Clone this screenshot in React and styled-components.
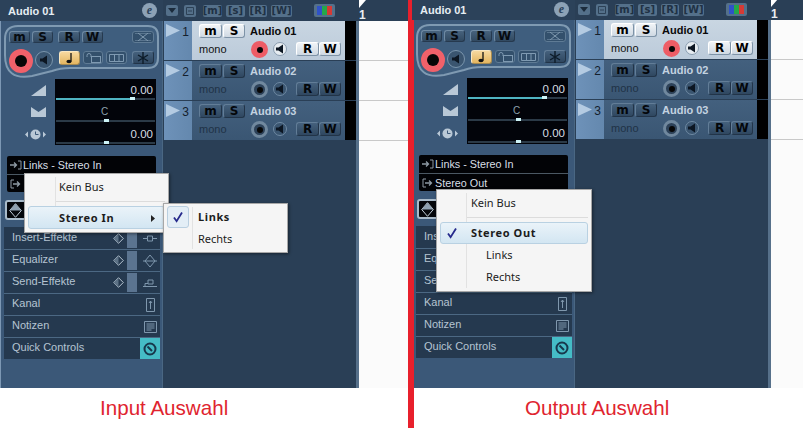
import React from "react";
import styled, { createGlobalStyle, css } from "styled-components";

const Global = createGlobalStyle`
  html, body { margin: 0; padding: 0; background: #fff; }
  #root { width: 803px; height: 428px; overflow: hidden; }
  * { box-sizing: border-box; }
`;

const Page = styled.div`
  display: flex; width: 803px; height: 428px; overflow: hidden;
  font-family: "Liberation Sans", Arial, sans-serif;
`;
const Divider = styled.div`width: 6px; flex: none; background: #e8202c;`;
const Pane = styled.div`
  position: relative; flex: none; width: ${p => p.$w}px;
  margin-top: ${p => p.$shift}px; display: flex; flex-direction: column;
`;
const Workspace = styled.div`display: flex; height: ${p => 388 - p.$shift}px; flex: none;`;
const Caption = styled.div`
  height: 40px; padding-left: ${p => p.$x}px; padding-top: 8px;
  font-size: 20.6px; line-height: 24px; color: #e0242f;
`;

const Inspector = styled.div`
  flex: none; width: ${p => p.$w}px; padding-left: ${p => p.$pad}px;
  background: #3b5878; display: flex; flex-direction: column;
  box-shadow: inset ${p => (p.$edge ? "1px" : "0")} 0 0 #7d98b4, inset -1px 0 0 #4a6783;
`;
const TitleBar = styled.div`
  height: 21px; margin-left: -4px; padding: 0 6px 0 8px; background: #2c425a;
  display: flex; align-items: center; justify-content: space-between;
  color: #e6edf3; font-size: 11px; font-weight: 700;
`;
const EditBadge = styled.span`
  width: 15px; height: 15px; border-radius: 50%; background: #8da2b6; color: #2c425a;
  font: italic 700 12px/14px "Liberation Serif", serif; text-align: center;
`;

const Group = styled.div`
  position: relative; width: 155px; height: 53px; margin-top: 4px; padding: 6px 5px 0;
`;
const GroupOutline = styled.svg`position: absolute; left: 0; top: 0;`;
const GroupRow = styled.div`position: relative; display: flex; align-items: flex-start; margin-top: ${p => p.$top || 0}px;`;

const btnTone = {
  dark: css`background: linear-gradient(#47627d, #314961); border-color: #6f8aa3 #26394e #26394e #6f8aa3; color: #070b10;`,
  light: css`background: linear-gradient(#f1f4f7, #cfd9e3); border-color: #fff #7e93a7 #7e93a7 #fff; color: #000;`,
  track: css`background: linear-gradient(#45617d, #2f4760); border-color: #627d97 #223448 #223448 #627d97; color: #04070b;`,
  amber: css`background: linear-gradient(#f7d9a0, #e4b660); border-color: #f9e7c2 #a78b52 #a78b52 #f9e7c2; color: #111;`,
  ghost: css`background: #33506c; border-color: #5f7b95; color: #7f9ab2;`,
};
const Btn = styled.div`
  flex: none; width: ${p => p.$w}px; height: ${p => p.$h || 13}px;
  margin-left: ${p => p.$gap || 0}px; margin-top: ${p => p.$top || 0}px;
  border: 1px solid; border-radius: 3px; display: flex; align-items: center; justify-content: center;
  font: 700 12px/1 "DejaVu Sans", sans-serif;
  ${p => btnTone[p.$tone || "dark"]}
`;
const Round = styled.div`
  flex: none; width: ${p => p.$d}px; height: ${p => p.$d}px; border-radius: 50%;
  margin-left: ${p => p.$gap || 0}px; margin-top: ${p => p.$top || 0}px;
  display: flex; align-items: center; justify-content: center;
  background: ${p => p.$bg}; border: ${p => p.$ring}px solid ${p => p.$border};
`;
const Dot = styled.span`width: ${p => p.$d}px; height: ${p => p.$d}px; border-radius: 50%; background: #070707;`;

const Faders = styled.div`display: flex; margin-top: 1px;`;
const FaderIcons = styled.div`width: 51px; flex: none; display: flex; flex-direction: column;`;
const FaderIcon = styled.div`height: 22px; padding-right: 9px; display: flex; align-items: center; justify-content: flex-end;`;
const FaderBox = styled.div`width: 101px; background: #02040a; padding: 0 1px;`;
const Fader = styled.div`
  position: relative; height: 22px; padding: 4px 2px 0 0; text-align: right;
  font-size: 11.5px; line-height: 14px; color: #d7dde2;
`;
const Center = styled.span`display: block; text-align: center; color: #8da0ad; font-size: 10px;`;
const Track = styled.div`position: absolute; left: 0; right: 0; bottom: 1px; height: 2px; background: #2b3a47;`;
const Fill = styled.div`height: 2px; background: #4fb4c2;`;
const Knob = styled.div`position: absolute; top: -1px; width: 5px; height: 3px; background: #cdf3f6;`;

const Bus = styled.div`
  width: 149px; margin: 11px 0 0 3px; height: 36px; background: #020306; border-radius: 2px;
  color: #d8dfe5; font-size: 10.8px;
`;
const BusRow = styled.div`
  display: flex; align-items: center; gap: 0; height: 18px; padding-left: 3px;
  border-top: ${p => (p.$sep ? "1px solid #4b5863" : "0")};
`;
const Diamond = styled.div`
  width: 40px; height: 20px; margin: 8px 0 0 1px; background: #05070b; border: 2px solid #a9bbca;
  border-radius: 3px; padding-left: 2px; display: flex; align-items: center;
`;
const Sections = styled.div`
  width: 156px; margin-top: 7px; background: #25394f; display: flex; flex-direction: column;
`;
const Section = styled.div`
  height: 22px; padding: 0 0 0 8px; display: flex; align-items: center;
  color: #b5c4d2; font-size: 11px; border-top: ${p => (p.$first ? "0" : "1px solid #4c6883")};
`;
const SectionLabel = styled.span`flex: 1; padding-bottom: 3px;`;
const Lamp = styled.span`width: 10px; height: 19px; background: #5b7490; margin: 0 3px 0 3px;`;
const SectionIcon = styled.span`width: 20px; height: 20px; display: flex; align-items: center; justify-content: center;`;
const Quick = styled.span`
  width: 20px; height: 21px; background: #45bcc6; display: flex; align-items: center; justify-content: center;
`;

const Arranger = styled.div`flex: 1; display: flex; flex-direction: column; min-width: 0; background: #2a3f56;`;
const Toolbar = styled.div`
  height: 21px; flex: none; display: flex; align-items: center; padding-left: 3px;
`;
const ToolBtn = styled.div`
  flex: none; width: ${p => p.$w}px; height: ${p => p.$h || 12}px; margin-left: ${p => p.$gap}px;
  background: #54708a; border-radius: 2px; display: flex; align-items: center; justify-content: center;
  color: #1f3144; font: 700 10px/1 "DejaVu Sans", sans-serif; overflow: hidden;
`;
const Rainbow = styled.div`
  width: 21px; height: 13px; margin-left: 22px; padding: 2px 3px; background: #54708a; border-radius: 2px;
  display: flex;
`;
const Hue = styled.span`flex: 1; background: ${p => p.$c};`;
const TrackArea = styled.div`flex: 1; display: flex; min-height: 0;`;
const Tracks = styled.div`width: 193px; flex: none; padding-left: 1px; display: flex; flex-direction: column; gap: 1px;`;
const Strip = styled.div`width: 3px; flex: none; background: #56708a;`;
const Canvas = styled.div`flex: 1; background: #fbfbfb; padding-top: 0;`;
const Lane = styled.div`height: 40px; border-bottom: 1px solid #c9c9c9;`;
const TrackRow = styled.div`display: flex; height: 39px;`;
const Number = styled.div`
  width: 28px; flex: none; position: relative; background: linear-gradient(90deg, #6e92b9, #6488ae);
  color: #14202c; font-size: 12px; padding: 4px 3px 0 0; text-align: right; line-height: 14px;
`;
const Play = styled.svg`position: absolute; left: 2px; top: 3px;`;
const TrackBody = styled.div`
  width: 153px; flex: none; padding: 3px 3px 0 7px;
  background: ${p => (p.$on ? "linear-gradient(#c9d6e2, #bccbda)" : "linear-gradient(#43607e, #3a5673)")};
`;
const Pad = styled.div`width: 11px; flex: none; background: #000;`;
const BodyLine = styled.div`display: flex; align-items: flex-start; height: ${p => p.$h}px;`;
const TrackName = styled.span`
  margin-left: 5px; font-size: 11px; font-weight: 700; line-height: 14px;
  color: ${p => (p.$on ? "#0a0a0a" : "#c3d2e0")};
`;
const Mono = styled.span`
  width: 52px; flex: none; font-size: 11px; line-height: 14px; padding-top: 0;
  color: ${p => (p.$on ? "#111" : "#1f3246")};
`;

const Menu = styled.div`
  position: absolute; left: ${p => p.$x}px; top: ${p => p.$y}px; width: ${p => p.$w}px;
  padding: ${p => p.$pad || 3}px; background: #f5f5f5; border: 1px solid #a7a7a7;
  box-shadow: 1px 1px 3px rgba(0, 0, 0, .45); z-index: 3;
  font-family: "Noto Sans", sans-serif; font-size: 11px; line-height: 14px; color: #1c1c1c;
  &::before {
    content: ""; position: absolute; top: 3px; bottom: 3px; left: ${p => p.$gutter}px;
    width: 1px; background: #e2e2e2;
  }
`;
const Item = styled.div`
  position: relative; height: ${p => p.$h || 22}px; display: flex; align-items: center;
  padding-left: ${p => p.$x}px; border-radius: 3px;
  ${p => p.$bold && css`font-weight: 700; letter-spacing: .6px;`}
  ${p => p.$hot && css`
    background: linear-gradient(#eaf3f9, #d3e6f2); border: 1px solid #b9d1e2;
    padding-left: ${p.$x - 1}px;
  `}
`;
const Rule = styled.div`height: 1px; margin: ${p => p.$m}; background: #dcdcdc;`;
const Check = styled.span`
  position: absolute; left: ${p => p.$x}px; top: 0; bottom: 0; width: 22px; display: flex;
  align-items: center; justify-content: center;
  ${p => p.$box && css`background: #e3eef6; border: 1px solid #b9cfe0; border-radius: 3px; top: 0;`}
`;
const Arrow = styled.svg`position: absolute; right: 9px; top: 8px;`;

const S = p => <svg width={p.w} height={p.h} viewBox={`0 0 ${p.w} ${p.h}`} style={{ display: "block" }}>{p.children}</svg>;

const Speaker = ({ c }) => <S w={8} h={10}><path d="M0 3.5h2.5L7 .5v9L2.5 6.5H0z" fill={c} /></S>;
const Tick = () => <S w={12} h={12}><path d="M2 6.5l2.6 3.7L10 1.5" fill="none" stroke="#262a8c" strokeWidth="1.8" /></S>;
const InIcon = () => <S w={13} h={10}><path d="M0 5h6M4 2.5L6.5 5 4 7.5" fill="none" stroke="#8e9aa4" strokeWidth="1.3" /><path d="M8 1h3v8H8" fill="none" stroke="#8e9aa4" /></S>;
const OutIcon = () => <S w={13} h={10}><path d="M4 1H1v8h3" fill="none" stroke="#8e9aa4" /><path d="M3 5h6M7 2.5L9.5 5 7 7.5" fill="none" stroke="#8e9aa4" strokeWidth="1.3" /></S>;
const SmallDiamond = () => <S w={11} h={11}><path d="M5.5.7l4.8 4.8-4.8 4.8L.7 5.5z" fill="none" stroke="#b7c5d1" /><path d="M5.5.7L.7 5.5l4.8 4.8z" fill="#5d7286" /></S>;

function ChannelGroup() {
  return (
    <Group>
      <GroupOutline width="155" height="53" viewBox="0 0 155 53">
        <path d="M14 1H144Q154 1 154 11V33Q154 43 144 43H66Q56 43 48 46L28 51Q1 56 1 30V14Q1 1 14 1Z" fill="#3f5e7e" stroke="#7f9ab2" strokeWidth="2" />
      </GroupOutline>
      <GroupRow>
        <Btn $w={21} $h={12}>m</Btn>
        <Btn $w={21} $h={12} $gap={2}>S</Btn>
        <Btn $w={22} $h={12} $gap={5}>R</Btn>
        <Btn $w={21} $h={12} $gap={2}>W</Btn>
        <Btn $w={22} $h={12} $gap={29} $tone="ghost">
          <S w={16} h={8}><path d="M0 0h16M0 8h16M3 0l10 8M13 0L3 8" stroke="#8099b0" fill="none" /></S>
        </Btn>
      </GroupRow>
      <GroupRow $top={5}>
        <Round $d={24} $ring={4} $border="#f0616a" $bg="#f0616a" $top={1}><Dot $d={12} /></Round>
        <Round $d={18} $ring={1} $border="#7a95ac" $bg="#3a5570" $gap={2} $top={3}><Speaker c="#0c1622" /></Round>
        <Btn $w={21} $h={14} $gap={6} $top={3} $tone="amber">
          <S w={9} h={12}><path d="M6 1v8.5" stroke="#111" strokeWidth="1.3" /><ellipse cx="4" cy="9.5" rx="2.6" ry="1.8" fill="#111" /></S>
        </Btn>
        <Btn $w={20} $h={13} $gap={3} $top={3} $tone="ghost">
          <S w={15} h={10}><path d="M1 4V2.500a2 2 0 0 1 4 0V4" fill="none" stroke="#7f9ab2" /><rect x="5.500" y="3.500" width="9" height="6" fill="none" stroke="#7f9ab2" /></S>
        </Btn>
        <Btn $w={21} $h={13} $gap={3} $top={3} $tone="ghost">
          <S w={15} h={8}><path d="M.5.500h14v7H.5zM5.500.500v7M10 .500v7" fill="none" stroke="#7f9ab2" /></S>
        </Btn>
        <Btn $w={22} $h={13} $gap={5} $top={3} $tone="track">
          <S w={12} h={12}><path d="M6 0v12M1 3l10 6M11 3L1 9" stroke="#0d1c29" strokeWidth="1.4" /></S>
        </Btn>
      </GroupRow>
    </Group>
  );
}

function FaderPanel() {
  return (
    <Faders>
      <FaderIcons>
        <FaderIcon><S w={15} h={11}><path d="M0 11L15 0v11z" fill="#b9c8d6" /></S></FaderIcon>
        <FaderIcon><S w={15} h={10}><path d="M0 0l7.500 5L15 0v10H0z" fill="#b9c8d6" /></S></FaderIcon>
        <FaderIcon>
          <S w={21} h={11}>
            <path d="M0 5.500l3-3v6zM21 5.500l-3-3v6z" fill="#b9c8d6" />
            <circle cx="10.500" cy="5.500" r="5" fill="#b9c8d6" />
            <path d="M10.500 2.500v3h3" stroke="#3b5878" fill="none" />
          </S>
        </FaderIcon>
      </FaderIcons>
      <FaderBox>
        <Fader>0.00<Track><Fill style={{ width: "79%" }} /><Knob style={{ left: "75%" }} /></Track></Fader>
        <Fader><Center>C</Center><Track><Knob style={{ left: "48%" }} /></Track></Fader>
        <Fader>0.00<Track><Knob style={{ left: "48%" }} /></Track></Fader>
      </FaderBox>
    </Faders>
  );
}

function SectionList() {
  const strip = (icon) => (
    <><SmallDiamond /><Lamp /><SectionIcon>{icon}</SectionIcon></>
  );
  const ic = "#7f97ad";
  return (
    <Sections>
      <Section $first><SectionLabel>Insert-Effekte</SectionLabel>
        {strip(<S w={14} h={7}><path d="M0 3.500h4M10 3.500h4M4.500 1h5v5h-5z" stroke={ic} fill="none" /></S>)}
      </Section>
      <Section><SectionLabel>Equalizer</SectionLabel>
        {strip(<S w={14} h={12}><path d="M7 0l5 6-5 6-5-6zM0 6h14" stroke={ic} fill="none" /></S>)}
      </Section>
      <Section><SectionLabel>Send-Effekte</SectionLabel>
        {strip(<S w={14} h={8}><path d="M0 7.500h14M2 7.500v-3h3M5 1h5v4H5z" stroke={ic} fill="none" /></S>)}
      </Section>
      <Section><SectionLabel>Kanal</SectionLabel>
        <SectionIcon><S w={9} h={14}><path d="M.5.500h8v13h-8zM4.500 3v8M3 5l1.500-2L6 5" stroke={ic} fill="none" /></S></SectionIcon>
      </Section>
      <Section><SectionLabel>Notizen</SectionLabel>
        <SectionIcon><S w={13} h={12}><path d="M.5.500h12v11H.5zM2.500 3h8M2.500 5h8M2.500 7h8M2.500 9h5" stroke={ic} fill="none" /></S></SectionIcon>
      </Section>
      <Section><SectionLabel>Quick Controls</SectionLabel>
        <Quick><S w={14} h={14}><circle cx="7" cy="7" r="5.500" fill="none" stroke="#17384c" strokeWidth="2" /><path d="M4.500 4.500L9 9" stroke="#17384c" strokeWidth="2" /></S></Quick>
      </Section>
    </Sections>
  );
}

function TrackLine({ n, name, on }) {
  const tone = on ? "light" : "track";
  return (
    <TrackRow>
      <Number>
        <Play width="14" height="13" viewBox="0 0 14 13"><path d="M0 0l14 6.500L0 13z" fill="#b4cbe2" /></Play>
        {n}
      </Number>
      <TrackBody $on={on}>
        <BodyLine $h={18}>
          <Btn $w={23} $h={14} $tone={tone}>m</Btn>
          <Btn $w={22} $h={14} $gap={1} $tone={tone}>S</Btn>
          <TrackName $on={on}>{name}</TrackName>
        </BodyLine>
        <BodyLine $h={18}>
          <Mono $on={on}>mono</Mono>
          {on
            ? <Round $d={17} $ring={3} $border="#ee5d66" $bg="#ee5d66" $top={-1}><Dot $d={6} /></Round>
            : <Round $d={17} $ring={3} $border="#70889e" $bg="#2d4259" $top={-1}><Dot $d={6} /></Round>}
          <Round $d={14} $ring={1} $border={on ? "#8a9db0" : "#6f8aa3"} $bg={on ? "#e6ecf1" : "#3a5570"} $gap={5}>
            <Speaker c="#0c1622" />
          </Round>
          <Btn $w={23} $h={14} $gap={9} $tone={tone}>R</Btn>
          <Btn $w={22} $h={14} $tone={tone}>W</Btn>
        </BodyLine>
      </TrackBody>
      <Pad />
    </TrackRow>
  );
}

function Arrange() {
  return (
    <Arranger>
      <Toolbar>
        <ToolBtn $w={12} $h={11} $gap={0}><S w={8} h={5}><path d="M0 0h8L4 5z" fill="#1b2b3c" /></S></ToolBtn>
        <ToolBtn $w={12} $gap={6}><S w={8} h={8}><path d="M.5.500h7v7h-7zM2 4h4" stroke="#2c4156" fill="none" /></S></ToolBtn>
        <ToolBtn $w={19} $gap={7}>[m]</ToolBtn>
        <ToolBtn $w={19} $gap={4}>[s]</ToolBtn>
        <ToolBtn $w={18} $gap={4}>[R]</ToolBtn>
        <ToolBtn $w={21} $gap={4}>[W]</ToolBtn>
        <Rainbow><Hue $c="#2f52c8" /><Hue $c="#25a84a" /><Hue $c="#d63a35" /></Rainbow>
      </Toolbar>
      <TrackArea>
        <Tracks>
          <TrackLine n={1} name="Audio 01" on />
          <TrackLine n={2} name="Audio 02" />
          <TrackLine n={3} name="Audio 03" />
        </Tracks>
        <Strip />
        <Canvas><Lane /><Lane /><Lane /></Canvas>
      </TrackArea>
    </Arranger>
  );
}

const ArrangeWrap = styled.div`flex: 1; display: flex; position: relative; min-width: 0;`;
const RulerMark = styled.div`
  position: absolute; left: 196px; top: 9px; color: #e9eef2; font-size: 12px; font-weight: 700; line-height: 12px;
`;
const RulerFlag = styled.svg`position: absolute; left: 0; top: -9px;`;

function Channel({ width, pad, edge, w, shift, second, menu, caption, capX }) {
  return (
    <Pane $w={w} $shift={shift}>
      <Workspace $shift={shift}>
        <Inspector $w={width} $pad={pad} $edge={edge}>
          <TitleBar>Audio 01<EditBadge>e</EditBadge></TitleBar>
          <ChannelGroup />
          <FaderPanel />
          <Bus>
            <BusRow><InIcon />Links - Stereo In</BusRow>
            <BusRow $sep><OutIcon />{second}</BusRow>
          </Bus>
          <Diamond><S w={13} h={15}><path d="M6.500.700l5.800 6.800-5.800 6.800L.7 7.500z" fill="none" stroke="#c4d0da" /><path d="M6.500.700L.7 7.500h11.600z" fill="#8ea0b0" /></S></Diamond>
          <SectionList />
        </Inspector>
        <ArrangeWrap><Arrange /><RulerMark><RulerFlag width="7" height="8" viewBox="0 0 7 8"><path d="M0 0h7L0 8z" fill="#fff" /></RulerFlag>1</RulerMark></ArrangeWrap>
      </Workspace>
      <Caption $x={capX}>{caption}</Caption>
      {menu}
    </Pane>
  );
}

export default function App() {
  const inputMenus = (
    <>
      <Menu $x={24} $y={173} $w={145} $gutter={30}>
        <Item $x={31} $h={20}>Kein Bus</Item>
        <Rule $m="4px 0 4px 27px" />
        <Item $x={31} $h={23} $hot $bold>
          Stereo In
          <Arrow width="4" height="7" viewBox="0 0 4 7"><path d="M0 0l4 3.500L0 7z" fill="#222" /></Arrow>
        </Item>
      </Menu>
      <Menu $x={163} $y={203} $w={125} $gutter={28} $pad={2}>
        <Item $x={32} $bold><Check $x={1} $box><Tick /></Check>Links</Item>
        <Item $x={32}>Rechts</Item>
      </Menu>
    </>
  );
  const outputMenu = (
    <Menu $x={22} $y={190} $w={156} $gutter={29}>
      <Item $x={31} $h={20}>Kein Bus</Item>
      <Rule $m="4px 0 4px 27px" />
      <Item $x={31} $h={22} $hot $bold><Check $x={0}><Tick /></Check>Stereo Out</Item>
      <Item $x={46}>Links</Item>
      <Item $x={46}>Rechts</Item>
    </Menu>
  );
  return (
    <Page>
      <Global />
      <Channel w={408} shift={0} width={163} pad={4} edge second="" menu={inputMenus} caption="Input Auswahl" capX={100} />
      <Divider />
      <Channel w={389} shift={-1} width={161} pad={2} second="Stereo Out" menu={outputMenu} caption="Output Auswahl" capX={111} />
    </Page>
  );
}
